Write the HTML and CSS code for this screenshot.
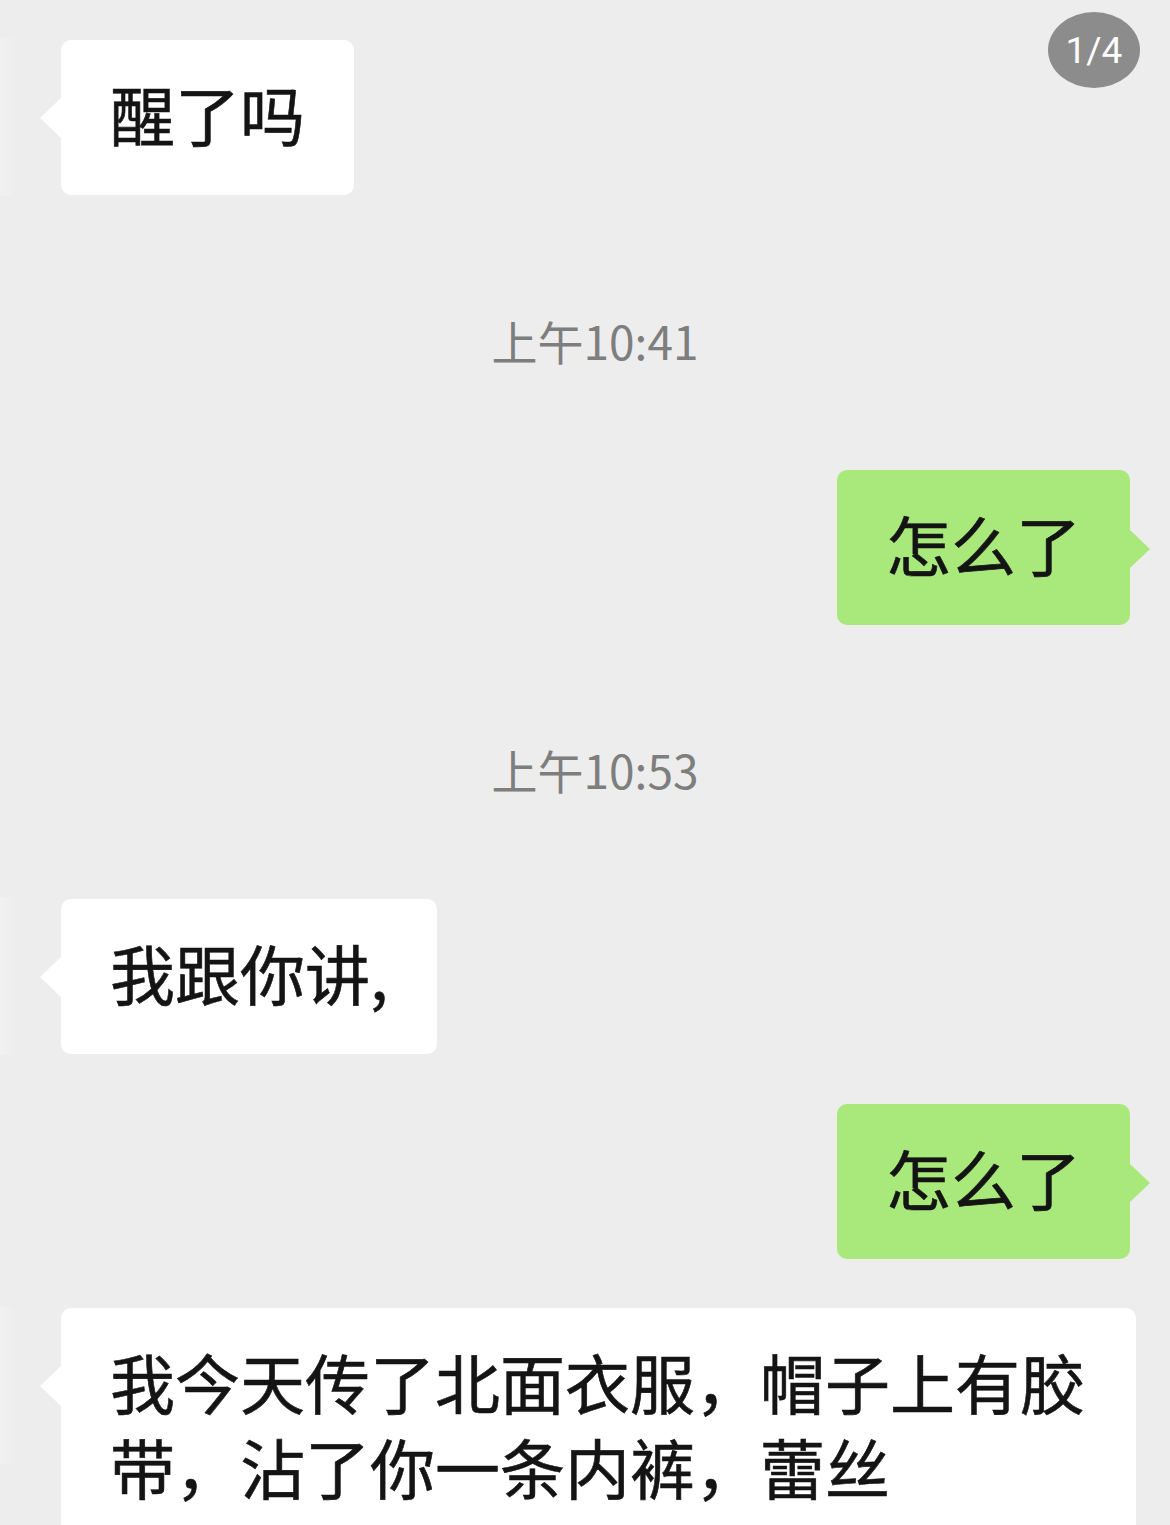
FILE: index.html
```html
<!DOCTYPE html>
<html lang="zh-CN">
<head>
<meta charset="utf-8">
<link rel="stylesheet" href="styles.css">
</head>
<body>
<div class="chat">
  <div class="badge">1/4</div>
  <div class="row left">
    <div class="avatar"></div>
    <div class="bubble white">醒了吗</div>
  </div>
  <div class="time">上午10:41</div>
  <div class="row right">
    <div class="bubble green">怎么了</div>
  </div>
  <div class="time">上午10:53</div>
  <div class="row left">
    <div class="avatar"></div>
    <div class="bubble white">我跟你讲,</div>
  </div>
  <div class="row right">
    <div class="bubble green">怎么了</div>
  </div>
  <div class="row left">
    <div class="avatar"></div>
    <div class="bubble white wide">我今天传了北面衣服，帽子上有胶带，沾了你一条内裤，蕾丝</div>
  </div>
</div>
</body>
</html>
```
FILE: styles.css
```css
html, body {
  margin: 0;
  padding: 0;
  background: #ededed;
}
body {
  font-family: "Noto Sans CJK SC", "Noto Sans", sans-serif;
  color: #141414;
  overflow: hidden;
}
.chat {
  position: relative;
  display: flex;
  flex-direction: column;
  padding-top: 40px;
}
.badge {
  position: absolute;
  top: 12px;
  left: 1048px;
  width: 92px;
  height: 76px;
  border-radius: 50%;
  background: #8c8c8c;
  color: #fff;
  font-family: Roboto, "Noto Sans", sans-serif;
  font-size: 37px;
  display: flex;
  align-items: center;
  justify-content: center;
}
.row {
  display: flex;
  align-items: flex-start;
  margin-bottom: 49px;
}
.row.left {
  padding-right: 20px;
}
.row.right {
  justify-content: flex-end;
  padding-right: 40px;
}
.avatar {
  width: 14px;
  height: 158px;
  margin-top: -2px;
  margin-right: 47px;
  background: linear-gradient(to right, #f1f1f1, #efefef 70%, #ededed);
  flex-shrink: 0;
}
.bubble {
  position: relative;
  font-size: 65px;
  line-height: 85px;
  padding: 31px 49px 39px;
  border-radius: 10px;
  box-sizing: border-box;
  -webkit-text-stroke: 0.6px #141414;
}
.bubble.white {
  background: #ffffff;
}
.bubble.green {
  background: #a9e97b;
}
.bubble.wide {
  max-width: 1075px;
}
.bubble.white::before {
  content: "";
  position: absolute;
  left: -21px;
  top: 58px;
  border-top: 20px solid transparent;
  border-bottom: 20px solid transparent;
  border-right: 21px solid #ffffff;
}
.bubble.green::after {
  content: "";
  position: absolute;
  right: -20px;
  top: 60px;
  border-top: 19px solid transparent;
  border-bottom: 19px solid transparent;
  border-left: 20px solid #a9e97b;
}
.time {
  text-align: center;
  font-size: 46px;
  line-height: 60px;
  color: #7e7e7e;
  margin-top: 65px;
  margin-bottom: 100px;
  padding-left: 20px;
}
```
